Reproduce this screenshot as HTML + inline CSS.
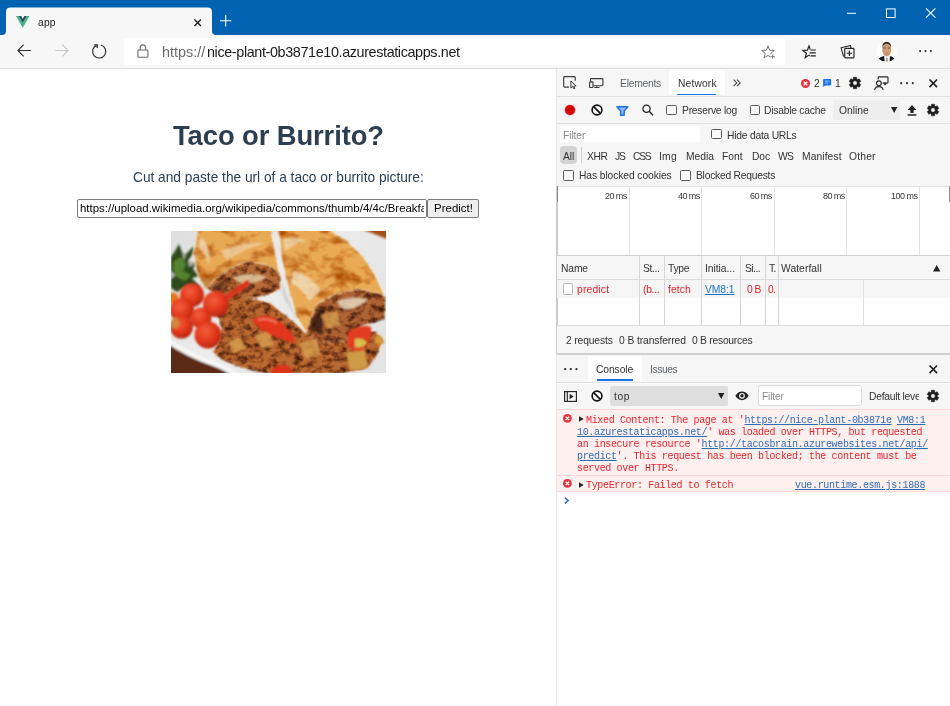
<!DOCTYPE html>
<html><head><meta charset="utf-8"><title>app</title>
<style>
*{box-sizing:border-box;margin:0;padding:0}
html,body{width:950px;height:706px;overflow:hidden;background:#fff}
body{position:relative;font-family:"Liberation Sans",sans-serif;font-size:10.3px;color:#333}
.a{position:absolute}
.t{position:absolute;white-space:pre;line-height:1;will-change:transform}
svg{position:absolute;overflow:visible}
.cb{position:absolute;width:10.5px;height:10.3px;border:1.1px solid #5a5a5a;background:#f9f9f9;border-radius:1.6px}
.hl{position:absolute;height:1px;background:#cdcdcd}
.vl{position:absolute;width:1px;background:#d6d6d6}
.m{will-change:transform;position:absolute;white-space:pre;font-family:"Liberation Mono",monospace;font-size:10px;letter-spacing:-0.343px;line-height:12px;color:#e8252b}
.m a{color:#2e6db4;text-decoration:underline}
</style></head><body>

<!-- browser chrome -->
<div class="a" style="left:0;top:0;width:950px;height:35px;background:#0063b1"></div>
<svg style="left:0;top:0" width="230" height="36" viewBox="0 0 230 36"><path d="M2 35 Q6 35 6 31 L6 12 Q6 7.6 10.5 7.6 L207.5 7.6 Q212 7.6 212 12 L212 31 Q212 35 216 35 L216 36 L2 36 Z" fill="#f7f7f7"/></svg>
<div class="a" style="left:0;top:35px;width:950px;height:33px;background:#f7f7f7"></div>
<div class="a" style="left:0;top:68px;width:950px;height:1px;background:#dcdcdc"></div>
<div class="a" style="left:124px;top:38px;width:661px;height:27px;background:#fff;border-radius:3px"></div>
<!-- vue logo -->
<svg style="left:15.5px;top:15.5px" width="13.5" height="11.7" viewBox="0 0 196 170"><path d="M0 0 L98 170 L196 0 L157 0 L98 102 L39 0 Z" fill="#41b883"/><path d="M39 0 L98 102 L157 0 L121 0 L98 40 L75 0 Z" fill="#35495e"/></svg>
<!-- tab close -->
<svg style="left:194.3px;top:18.5px" width="7.4" height="7.4" viewBox="0 0 8 8"><path d="M0.5 0.5 L7.5 7.5 M7.5 0.5 L0.5 7.5" stroke="#1a1a1a" stroke-width="1.5" fill="none"/></svg>
<!-- new tab plus -->
<svg style="left:219.8px;top:15.1px" width="11.4" height="11.4" viewBox="0 0 12 12"><path d="M6 0 V12 M0 6 H12" stroke="#fff" stroke-width="1.15" fill="none"/></svg>
<!-- window controls -->
<svg style="left:846.8px;top:8px" width="90" height="10" viewBox="0 0 90 10"><path d="M0 5.3 H9" stroke="#fff" stroke-width="1" fill="none"/><rect x="39.5" y="0.9" width="8.6" height="8.6" stroke="#fff" stroke-width="1" fill="none"/><path d="M79 0.4 L88.4 9.6 M88.4 0.4 L79 9.6" stroke="#fff" stroke-width="1.05" fill="none"/></svg>
<!-- back -->
<svg style="left:17.3px;top:44.4px" width="14" height="13" viewBox="0 0 14 13"><path d="M13.8 6.5 H1 M6.6 0.7 L0.9 6.5 L6.6 12.3" stroke="#2b2b2b" stroke-width="1.15" fill="none"/></svg>
<!-- forward -->
<svg style="left:55px;top:44.4px" width="14" height="13" viewBox="0 0 14 13"><path d="M0.2 6.5 H13 M7.4 0.7 L13.1 6.5 L7.4 12.3" stroke="#c8c8c8" stroke-width="1.15" fill="none"/></svg>
<!-- reload -->
<svg style="left:91.9px;top:44.1px" width="15" height="15" viewBox="0 0 15 15"><path d="M8.86 1.06 A6.6 6.6 0 1 1 4.5 1.4" stroke="#2b2b2b" stroke-width="1.15" fill="none"/><path d="M2.2 0.9 H5.2 V3.9" stroke="#2b2b2b" stroke-width="1.25" fill="none"/></svg>
<!-- lock -->
<svg style="left:137px;top:44.4px" width="12" height="14" viewBox="0 0 12 14"><rect x="0.9" y="6" width="10" height="7.2" rx="0.8" stroke="#6b6b6b" stroke-width="1.1" fill="none"/><path d="M3.2 6 V3.6 A2.7 2.7 0 0 1 8.6 3.6 V6" stroke="#6b6b6b" stroke-width="1.1" fill="none"/></svg>
<!-- add favourite star -->
<svg style="left:760px;top:43.6px" width="16" height="16" viewBox="0 0 16 16"><path d="M8.00 1.80 L9.70 6.15 L14.37 6.43 L10.76 9.40 L11.94 13.92 L8.00 11.40 L4.06 13.92 L5.24 9.40 L1.63 6.43 L6.30 6.15 Z" stroke="#757575" stroke-width="1" fill="none" stroke-linejoin="miter"/><rect x="10.4" y="10.4" width="4.6" height="4.8" fill="#fff"/><path d="M12.7 10.6 V14.8 M10.6 12.7 H14.8" stroke="#757575" stroke-width="1"/></svg>
<!-- favourites -->
<svg style="left:803.1px;top:43.6px" width="15" height="16" viewBox="0 0 15 16"><path d="M6.00 2.00 L7.59 6.22 L12.09 6.42 L8.57 9.23 L9.76 13.58 L6.00 11.10 L2.24 13.58 L3.43 9.23 L-0.09 6.42 L4.41 6.22 Z" stroke="#222" stroke-width="1.2" fill="none"/><path d="M7.6 4.6 H15 V15 H8.2 L6.9 11.4 L6.4 10.2 Z" fill="#f7f7f7"/><path d="M7.6 6.0 H12.8 M6.5 8.9 H12.8 M7.6 11.9 H12.8" stroke="#222" stroke-width="1.15"/></svg>
<!-- collections -->
<svg style="left:840px;top:44px" width="15" height="15" viewBox="0 0 15 15"><path d="M3.6 12.6 L1.1 3.8 L10.4 1.5 L11.1 4.2" stroke="#222" stroke-width="1.1" fill="none" stroke-linejoin="round"/><rect x="4.7" y="4.4" width="9.3" height="9.5" rx="0.9" stroke="#222" stroke-width="1.15" fill="#f7f7f7"/><path d="M9.4 6.5 V11.9 M6.7 9.2 H12.1" stroke="#222" stroke-width="1.15"/></svg>
<!-- avatar -->
<svg style="left:875.7px;top:41px" width="21" height="21" viewBox="0 0 40 40"><defs><clipPath id="av"><circle cx="20" cy="20" r="20"/></clipPath><filter id="avb" x="-10%" y="-10%" width="120%" height="120%"><feGaussianBlur stdDeviation="0.7"/></filter></defs><g clip-path="url(#av)"><rect width="40" height="40" fill="#fdfdfd"/><g filter="url(#avb)"><path d="M15 28 L25.5 28 L27.5 39 L15 39 Z" fill="#eef1f8"/><path d="M5 34 Q8 30 15.6 28.6 L16.4 39 L6 39 Z" fill="#15161c"/><path d="M35.6 34 Q33 30 26.6 28.6 L26 39 L35 39 Z" fill="#15161c"/><path d="M19.4 32 L22 32 L22.8 39 L18.8 39 Z" fill="#b39a6e"/><ellipse cx="20.4" cy="16.6" rx="8.6" ry="12.6" fill="#cf9c72"/><path d="M12 13.6 Q11 1.6 20.4 1.4 Q29.8 1.6 28.8 13.6 Q27.6 5.4 20.4 5 Q13.2 5.4 12 13.6 Z" fill="#3a2a20"/><path d="M14 13.4 H18.6 M22.2 13.4 H26.8" stroke="#4a2e20" stroke-width="2" opacity="0.7"/><ellipse cx="20.4" cy="24" rx="2.6" ry="1.5" fill="#d9707a"/></g></g></svg>
<!-- menu dots -->
<svg style="left:919.4px;top:50.2px" width="13" height="2.2" viewBox="0 0 13 2.2"><circle cx="1.1" cy="1.1" r="1.05" fill="#2b2b2b"/><circle cx="6.5" cy="1.1" r="1.05" fill="#2b2b2b"/><circle cx="11.9" cy="1.1" r="1.05" fill="#2b2b2b"/></svg>

<!-- page content -->
<div class="a" style="left:76.5px;top:199px;width:350.5px;height:18.6px;border:1px solid #7a7a7a;border-radius:2px;background:#fff;overflow:hidden"><div class="t" style="left:2.3px;top:3px;font-size:11.45px;color:#000">https://upload.wikimedia.org/wikipedia/commons/thumb/4/4c/Breakfast_burrito.jpg</div><div class="a" style="left:346.3px;top:0;width:4px;height:18px;background:#fff"><!--clipstrip--></div></div>
<div class="a" style="left:427.2px;top:199px;width:52px;height:18.6px;border:1px solid #7a7a7a;border-radius:2px;background:#efefef"></div>
<svg style="left:171px;top:231px" width="215" height="142" viewBox="0 0 215 142">
<defs>
<clipPath id="ic"><rect width="215" height="142"/></clipPath>
<filter id="b1" x="-10%" y="-10%" width="120%" height="120%"><feGaussianBlur stdDeviation="0.9"/></filter>
<filter id="b3" x="-20%" y="-20%" width="140%" height="140%"><feGaussianBlur stdDeviation="3"/></filter>
<filter id="mot" x="0" y="0" width="100%" height="100%" color-interpolation-filters="sRGB"><feTurbulence type="fractalNoise" baseFrequency="0.13 0.16" numOctaves="3" seed="7" result="n"/><feColorMatrix in="n" type="matrix" values="1.5 0 0 0 0.12  1.7 0 0 0 -0.04  1.7 0 0 0 -0.1  0 0 0 0 1" result="g"/><feBlend mode="multiply" in="SourceGraphic" in2="g" result="m"/><feComposite operator="in" in="m" in2="SourceGraphic"/></filter>
<filter id="mot2" x="0" y="0" width="100%" height="100%" color-interpolation-filters="sRGB"><feTurbulence type="fractalNoise" baseFrequency="0.05 0.075" numOctaves="3" seed="21" result="n"/><feColorMatrix in="n" type="matrix" values="0 0.7 0 0 0.62  0 1.5 0 0 0.18  0 2.6 0 0 -0.42  0 0 0 0 1" result="g"/><feBlend mode="multiply" in="SourceGraphic" in2="g" result="m"/><feComposite operator="in" in="m" in2="SourceGraphic"/></filter>
<linearGradient id="pl" x1="0" y1="0" x2="1" y2="0.6"><stop offset="0" stop-color="#dedede"/><stop offset="0.5" stop-color="#ececec"/><stop offset="1" stop-color="#e4e4e4"/></linearGradient>
<radialGradient id="tm" cx="0.4" cy="0.36" r="0.68"><stop offset="0" stop-color="#f4603c"/><stop offset="0.55" stop-color="#e2391c"/><stop offset="1" stop-color="#b3240e"/></radialGradient>
</defs>
<g clip-path="url(#ic)">
<rect width="215" height="142" fill="url(#pl)"/>
<g filter="url(#b1)">
<!-- wood + plate rim -->
<path d="M-3 112 Q18 127 42 135 Q56 140 66 146 L-3 146 Z" fill="#5a2c12"/>
<path d="M-3 107 Q20 122 46 131 Q62 137 74 146 L62 146 Q54 139 40 134 Q16 126 -3 113 Z" fill="#f6f6f6"/>
<path d="M190 -2 L218 -2 L218 9 Q204 3 190 -2 Z" fill="#a3501e"/>
<path d="M108 42 Q116 66 128 92 L134 100 L124 86 L112 66 Z" fill="#d2d2d2"/>
<!-- parsley -->
<path d="M0 26 L4 20 L8 13 L11 21 L15 23 L23 15 L21 24 L17 30 L25 32 L22 38 L28 45 L21 47 L29 56 L23 61 L14 56 L6 61 L0 57 Z" fill="#2f4a1b"/>
<path d="M11 21 L15 23 L13 30 Z M17 30 L25 32 L18 36 Z M0 40 L5 44 L0 48 Z" fill="#dcdcdc" opacity="0.7"/>
<path d="M3 30 L10 26 L15 33 L12 40 L20 44 L14 50 L6 46 L2 38 Z" fill="#55832e"/>
</g>
<g filter="url(#mot2)"><g filter="url(#b1)">
<!-- left tortilla -->
<path d="M27 -2 L100 -2 L104 20 L109 44 L109 56 L96 62 L60 64 L45 60 L35 58 L27 45 L22 22 Z" fill="#e8a955"/>
<!-- right tortilla -->
<path d="M107 -2 L158 -2 L176 10 L192 25 L204 43 L214 65 L213 84 L190 90 L150 100 L135 102 L125 85 L118 60 L112 35 Z" fill="#e9aa55"/>
</g></g>
<g filter="url(#b1)">
<path d="M30 6 Q40 14 38 34 Q34 22 27 16 Z" fill="#f0dcb4" opacity="0.8"/>
<path d="M50 20 Q70 10 96 12 Q70 18 56 30 Z" fill="#f2e0bc" opacity="0.6"/>
<path d="M122 40 Q140 44 150 60 L138 70 Q130 56 120 52 Z" fill="#f1e2c2" opacity="0.75"/>
<path d="M112 8 Q124 4 136 10 Q124 12 114 20 Z" fill="#f1dfba" opacity="0.7"/>
<path d="M27 44 L35 58 L45 47 Q36 50 27 44 Z" fill="#b97a36" opacity="0.7"/>
</g>
<g filter="url(#mot)"><g filter="url(#b1)">
<!-- left filling -->
<path d="M35 58 L45 47 L60 37 L75 30 L98 34 L109 44 L110 58 L98 64 L85 67 L60 68 L45 63 Z" fill="#b56a38"/>
<!-- right filling -->
<path d="M146 73 L165 63 L186 58 L208 62 L215 66 L214 88 L200 93 L190 95 L175 110 L150 112 L135 102 L140 88 Z" fill="#ad6434"/>
<!-- hash -->
<path d="M60 66 L85 68 L100 72 L112 82 L125 92 L135 102 L150 112 L175 110 L190 100 L205 100 L212 110 L206 125 L196 138 L170 143 L95 143 L70 137 L50 129 L41 121 L48 110 L50 96 L45 82 L52 72 Z" fill="#b96a32"/>
</g></g>
<g filter="url(#b1)">
<path d="M139 92 Q144 80 156 76 Q150 90 152 104 Q144 104 139 92 Z" fill="#2a160a" opacity="0.75"/>
<path d="M40 58 Q48 50 58 46 Q52 56 50 63 Z" fill="#3a1e0e" opacity="0.6"/>
<!-- cream / potato patches -->
<path d="M62 46 Q78 40 96 46 Q88 52 74 53 Q66 52 62 46 Z" fill="#e2c9a0" opacity="0.85"/>
<path d="M166 70 Q180 64 198 68 Q190 76 176 79 Q168 78 166 70 Z" fill="#e6d6bc" opacity="0.85"/>
<path d="M175 122 L194 118 L197 137 L179 140 Z" fill="#cf9a44"/>
<path d="M84 104 L98 100 L103 114 L90 118 Z M128 112 L146 108 L150 124 L134 128 Z M58 110 L70 106 L75 118 L62 122 Z M150 84 L166 80 L170 94 L156 98 Z" fill="#d9a050" opacity="0.8"/>
<path d="M205 104 Q212 104 213 112 Q208 116 203 111 Z" fill="#d8973c"/>
<!-- peppers -->
<path d="M57 66 L76 52" stroke="#dc341c" stroke-width="5.5" stroke-linecap="round"/>
<path d="M81 89 Q90 83 100 85 Q112 91 122 104 L125 112 Q114 110 100 104 Q88 99 81 89 Z" fill="#e2341c"/>
<path d="M87 89 Q96 86 106 92" stroke="#f47a5c" stroke-width="2.2" fill="none"/>
<path d="M177 101 Q190 92 200 96 Q202 110 190 120 Q180 122 176 112 Z" fill="#e23c20"/>
<path d="M184 108 Q192 106 196 112 Q190 118 184 116 Z" fill="#d8c050"/>
<path d="M101 138 Q110 130 120 137 L122 144 L100 144 Z" fill="#dc341c"/>
<!-- cherry tomatoes -->
<circle cx="2" cy="67" r="5.5" fill="#e8741c"/>
<circle cx="21" cy="64" r="12" fill="url(#tm)"/>
<circle cx="45" cy="73" r="13" fill="url(#tm)"/>
<circle cx="11" cy="79" r="12" fill="url(#tm)"/>
<circle cx="30" cy="87" r="10.5" fill="url(#tm)"/>
<circle cx="10.5" cy="96" r="11.5" fill="url(#tm)"/>
<ellipse cx="4" cy="92" rx="4" ry="6" fill="#c8a040" opacity="0.7"/>
<circle cx="37" cy="104" r="13.5" fill="url(#tm)"/>
</g>
</g>
</svg>

<!-- devtools frame -->
<div class="a" style="left:556px;top:69px;width:394px;height:637px;background:#fff"></div>
<div class="a" style="left:556px;top:69px;width:1px;height:637px;background:#e6e6e6"></div>
<div class="a" style="left:556.2px;top:186px;width:1.4px;height:168px;background:#cbcbcb"></div>
<!-- main tab bar -->
<div class="a" style="left:557px;top:69px;width:393px;height:27px;background:#f6f6f6"></div>
<div class="a" style="left:669px;top:70px;width:56px;height:25px;background:#fff;border-radius:3px 3px 0 0"></div>
<div class="a" style="left:677px;top:93.5px;width:38.5px;height:1.6px;background:#1a73e8"></div>
<div class="hl" style="left:557px;top:95.6px;width:393px;background:#dfdfdf"></div>
<!-- network toolbar -->
<div class="a" style="left:557px;top:96.6px;width:393px;height:27px;background:#f6f6f6"></div>
<div class="hl" style="left:557px;top:123.2px;width:393px;background:#dfdfdf"></div>
<!-- filter section -->
<div class="a" style="left:557px;top:124px;width:393px;height:62px;background:#f6f6f6"></div>
<div class="a" style="left:560px;top:126.3px;width:140px;height:15.6px;background:#fff"></div>
<div class="a" style="left:560px;top:146.4px;width:17.2px;height:17.8px;background:#d4d4d4;border-radius:4px"></div>
<div class="vl" style="left:581px;top:147px;height:16px;background:#cfcfcf"></div>
<div class="hl" style="left:557px;top:185.6px;width:393px;background:#e2e2e2"></div>
<!-- timeline -->
<div class="vl" style="left:629px;top:186.5px;height:69px;background:#e3e3e3"></div>
<div class="vl" style="left:701.3px;top:186.5px;height:69px;background:#e3e3e3"></div>
<div class="vl" style="left:774px;top:186.5px;height:69px;background:#e3e3e3"></div>
<div class="vl" style="left:846.2px;top:186.5px;height:69px;background:#e3e3e3"></div>
<div class="vl" style="left:919.2px;top:186.5px;height:69px;background:#e3e3e3"></div>
<div class="a" style="left:557px;top:186px;width:1.3px;height:15.5px;background:#8c8c8c"></div>
<div class="a" style="left:948.6px;top:186px;width:1.4px;height:15.5px;background:#8c8c8c"></div>
<div class="a" style="left:557px;top:254.6px;width:393px;height:1.8px;background:#cfcfcf"></div>
<!-- table -->
<div class="a" style="left:557px;top:256.4px;width:393px;height:23px;background:#f6f6f6"></div>
<div class="hl" style="left:557px;top:278.8px;width:393px;background:#dadada"></div>
<div class="a" style="left:557px;top:280px;width:393px;height:18.4px;background:#f5f5f5"></div>
<div class="vl" style="left:639.3px;top:256.4px;height:68.6px"></div>
<div class="vl" style="left:664.1px;top:256.4px;height:68.6px"></div>
<div class="vl" style="left:701.1px;top:256.4px;height:68.6px"></div>
<div class="vl" style="left:740.3px;top:256.4px;height:68.6px"></div>
<div class="vl" style="left:764.6px;top:256.4px;height:68.6px"></div>
<div class="vl" style="left:777.6px;top:256.4px;height:68.6px"></div>
<div class="vl" style="left:863.2px;top:280px;height:45px;background:#e2e2e2"></div>
<div class="a" style="left:562.5px;top:283.2px;width:10.3px;height:11.6px;background:#fff;border:1px solid #b4b4b4;border-radius:1.5px"></div>
<div class="hl" style="left:557px;top:324.8px;width:393px;background:#dcdcdc"></div>
<!-- status bar -->
<div class="a" style="left:557px;top:325.8px;width:393px;height:27.4px;background:#f6f6f6"></div>
<div class="a" style="left:557px;top:353px;width:393px;height:1.8px;background:#cfcfcf"></div>
<!-- drawer tabs -->
<div class="a" style="left:557px;top:354.8px;width:393px;height:28px;background:#f6f6f6"></div>
<div class="a" style="left:588.3px;top:356.3px;width:53.4px;height:24.6px;background:#fff;border-radius:3px 3px 0 0"></div>
<div class="a" style="left:596.5px;top:379.4px;width:36px;height:1.6px;background:#1a73e8"></div>
<div class="hl" style="left:557px;top:382.4px;width:393px;background:#dfdfdf"></div>
<!-- console toolbar -->
<div class="a" style="left:557px;top:383.6px;width:393px;height:25.6px;background:#f6f6f6"></div>
<div class="a" style="left:610px;top:385.8px;width:118px;height:20px;background:#dedede;border-radius:2px"></div>
<div class="a" style="left:758px;top:385.4px;width:103.6px;height:21px;background:#fff;border:1px solid #dcdcdc;border-radius:2.5px"></div>
<div class="a" style="left:833px;top:99.6px;width:66.5px;height:20.4px;background:#eeeeee;border-radius:2px"></div>
<div class="hl" style="left:557px;top:409.2px;width:393px;background:#e2e2e2"></div>
<div class="a" style="left:868px;top:388px;width:51.4px;height:16px;overflow:hidden"><div class="t" style="left:0.7px;top:4.2px;font-size:10.3px;color:#333;letter-spacing:-0.24px">Default levels</div></div>

<!-- checkboxes -->
<div class="cb" style="left:666.4px;top:105px"></div>
<div class="cb" style="left:749.8px;top:105px"></div>
<div class="cb" style="left:711px;top:128.8px"></div>
<div class="cb" style="left:563.2px;top:170.3px"></div>
<div class="cb" style="left:680px;top:170.3px"></div>

<!-- icons: inspect -->
<svg style="left:563.3px;top:76.4px" width="14" height="13" viewBox="0 0 14 13"><path d="M5.9 11.1 H1.6 Q0.7 11.1 0.7 10.2 V1.5 Q0.7 0.6 1.6 0.6 H11.3 Q12.2 0.6 12.2 1.5 V4.8" stroke="#3a3a3a" stroke-width="1.15" fill="none"/><path d="M7.9 4.9 L7.9 12.1 L9.7 10.5 L10.9 12.9 L11.9 12.4 L10.8 10.1 L13.1 9.9 Z" fill="#e9e9e9" stroke="#3a3a3a" stroke-width="0.95" stroke-linejoin="round"/></svg>
<!-- device -->
<svg style="left:589px;top:78.4px" width="15" height="11" viewBox="0 0 15 11"><path d="M4.2 7.7 H13 Q13.9 7.7 13.9 6.8 V1.5 Q13.9 0.6 13 0.6 H2.4 Q1.5 0.6 1.5 1.5 V3.6" stroke="#3a3a3a" stroke-width="1.15" fill="none"/><rect x="0.6" y="3.9" width="3.4" height="5.6" rx="0.7" stroke="#3a3a3a" stroke-width="1.1" fill="#f6f6f6"/><path d="M5.4 9.5 H10.4" stroke="#3a3a3a" stroke-width="1"/><path d="M6.9 9.4 L7.8 7.8 L8.7 9.4 Z" fill="#3a3a3a"/></svg>
<!-- chevrons -->
<svg style="left:732.6px;top:79px" width="8" height="8" viewBox="0 0 8 8"><path d="M0.6 0.6 L3.8 3.9 L0.6 7.2 M4 0.6 L7.2 3.9 L4 7.2" stroke="#444" stroke-width="1.05" fill="none"/></svg>
<!-- error badge -->
<svg style="left:801.3px;top:78.9px" width="9" height="9" viewBox="0 0 10 10"><circle cx="5" cy="5" r="5" fill="#e8303c"/><path d="M3 3 L7 7 M7 3 L3 7" stroke="#fff" stroke-width="1.5"/></svg>
<!-- message badge -->
<svg style="left:823px;top:79px" width="8.2" height="8" viewBox="0 0 10 10"><path d="M1 0 H9 Q10 0 10 1 V7 Q10 8 9 8 H3 L0 10 V1 Q0 0 1 0 Z" fill="#1a73e8"/><path d="M2.2 2.6 H7.8 M2.2 5 H6.4" stroke="#cfe0fb" stroke-width="0.9"/></svg>
<!-- gears -->
<svg style="left:849.3px;top:77.4px" width="12" height="12" viewBox="-6 -6 12 12"><path id="gear" d="M-1.75 -3.93 L-1.61 -5.78 L1.61 -5.78 L1.75 -3.93 L2.53 -3.48 L4.20 -4.29 L5.81 -1.49 L4.28 -0.45 L4.28 0.45 L5.81 1.49 L4.20 4.29 L2.53 3.48 L1.75 3.93 L1.61 5.78 L-1.61 5.78 L-1.75 3.93 L-2.53 3.48 L-4.20 4.29 L-5.81 1.49 L-4.28 0.45 L-4.28 -0.45 L-5.81 -1.49 L-4.20 -4.29 L-2.53 -3.48 Z M2.20 0 A2.20 2.20 0 1 0 -2.20 0 A2.20 2.20 0 1 0 2.20 0 Z" fill="#1e1e1e" fill-rule="evenodd" stroke="#1e1e1e" stroke-width="0.5" stroke-linejoin="round"/></svg>
<svg style="left:926.7px;top:104px" width="12" height="12" viewBox="-6 -6 12 12"><use href="#gear"/></svg>
<svg style="left:926.7px;top:389.9px" width="12" height="12" viewBox="-6 -6 12 12"><use href="#gear"/></svg>
<!-- feedback -->
<svg style="left:874px;top:76px" width="15" height="15" viewBox="0 0 15 15"><circle cx="4.9" cy="7.3" r="2.4" stroke="#2a2a2a" stroke-width="1.15" fill="none"/><path d="M0.7 14 Q1 10.6 4.9 10.6 Q8.8 10.6 9.1 14" stroke="#2a2a2a" stroke-width="1.15" fill="none"/><path d="M4.2 3.6 V1.8 Q4.2 0.9 5.1 0.9 H13.1 Q14 0.9 14 1.8 V6.2 Q14 7.1 13.1 7.1 H12.2 L10.9 8.9 V7.1 H8.6" stroke="#2a2a2a" stroke-width="1.15" fill="none" stroke-linejoin="round"/><path d="M9.4 6.6 H12.4 L10.9 8.8 Z" fill="#2a2a2a"/></svg>
<!-- more dots -->
<svg style="left:900px;top:82.3px" width="14" height="2.4" viewBox="0 0 14 2.4"><circle cx="1.2" cy="1.2" r="1.1" fill="#333"/><circle cx="7" cy="1.2" r="1.1" fill="#333"/><circle cx="12.8" cy="1.2" r="1.1" fill="#333"/></svg>
<svg style="left:563.6px;top:368.3px" width="13.6" height="2.2" viewBox="0 0 13.6 2.2"><circle cx="1.1" cy="1.1" r="1.15" fill="#2a2a2a"/><circle cx="6.8" cy="1.1" r="1.15" fill="#2a2a2a"/><circle cx="12.5" cy="1.1" r="1.15" fill="#2a2a2a"/></svg>
<!-- close X -->
<svg style="left:928.6px;top:79.2px" width="8.6" height="8.6" viewBox="0 0 8 8"><path d="M0.5 0.5 L7.5 7.5 M7.5 0.5 L0.5 7.5" stroke="#1e1e1e" stroke-width="1.5" fill="none"/></svg>
<svg style="left:928.6px;top:364.9px" width="8.6" height="8.6" viewBox="0 0 8 8"><path d="M0.5 0.5 L7.5 7.5 M7.5 0.5 L0.5 7.5" stroke="#1e1e1e" stroke-width="1.5" fill="none"/></svg>
<!-- record -->
<svg style="left:564.4px;top:104px" width="12" height="12" viewBox="0 0 12 12"><circle cx="6" cy="6" r="5.8" fill="#f2b8b8"/><circle cx="6" cy="6" r="5" fill="#d60000"/></svg>
<!-- clear (network) -->
<svg style="left:590.7px;top:104.1px" width="12" height="12" viewBox="0 0 12 12"><circle cx="6" cy="6" r="4.9" stroke="#111" stroke-width="1.6" fill="none"/><path d="M2.6 2.6 L9.4 9.4" stroke="#111" stroke-width="1.6"/></svg>
<!-- clear (console) -->
<svg style="left:590.7px;top:389.9px" width="12" height="12" viewBox="0 0 12 12"><circle cx="6" cy="6" r="4.9" stroke="#111" stroke-width="1.6" fill="none"/><path d="M2.6 2.6 L9.4 9.4" stroke="#111" stroke-width="1.6"/></svg>
<!-- filter funnel -->
<svg style="left:615.8px;top:105.6px" width="12.6" height="10.6" viewBox="0 0 12.6 10.6"><path d="M0.9 0.8 H11.9 L8.2 5 V9.3 H4.6 V5 Z" stroke="#1a73e8" stroke-width="1.4" fill="#8cb9f2" stroke-linejoin="round"/></svg>
<!-- search -->
<svg style="left:641.5px;top:104.4px" width="12" height="12" viewBox="0 0 12 12"><circle cx="4.5" cy="4.7" r="3.6" stroke="#222" stroke-width="1.3" fill="none"/><path d="M7.1 7.3 L11 11.2" stroke="#222" stroke-width="1.5"/></svg>
<!-- select arrows -->
<svg style="left:890.6px;top:106.6px" width="6.4" height="6" viewBox="0 0 6.4 6"><path d="M0 0 H6.4 L3.2 6 Z" fill="#222"/></svg>
<svg style="left:718px;top:393.2px" width="6.4" height="6" viewBox="0 0 6.4 6"><path d="M0 0 H6.4 L3.2 6 Z" fill="#222"/></svg>
<!-- upload -->
<svg style="left:907.2px;top:104.6px" width="10" height="11" viewBox="0 0 10 11"><path d="M5 0 L9.4 5 H6.6 V8 H3.4 V5 H0.6 Z" fill="#222"/><rect x="0.6" y="9.2" width="8.8" height="1.5" fill="#222"/></svg>
<!-- sort arrow -->
<svg style="left:933.4px;top:264.6px" width="7.4" height="6.6" viewBox="0 0 7.4 6.6"><path d="M3.7 0 L7.4 6.6 H0 Z" fill="#222"/></svg>
<!-- console sidebar toggle -->
<svg style="left:563.6px;top:390.8px" width="13" height="11" viewBox="0 0 13 11"><rect x="0.6" y="0.6" width="11.8" height="9.8" stroke="#222" stroke-width="1.15" fill="none"/><path d="M3.3 0.6 V10.4" stroke="#222" stroke-width="1.1"/><path d="M5.6 2.8 L9.6 5.5 L5.6 8.2 Z" fill="#222"/></svg>
<!-- eye -->
<svg style="left:735px;top:391.2px" width="14" height="9.6" viewBox="0 0 14 9.6"><path d="M0.3 4.8 Q3 0.4 7 0.4 Q11 0.4 13.7 4.8 Q11 9.2 7 9.2 Q3 9.2 0.3 4.8 Z" fill="#222"/><circle cx="7" cy="4.8" r="2.9" fill="#f6f6f6"/><circle cx="7" cy="4.8" r="1.7" fill="#222"/></svg>

<!-- text labels -->
<div class="t" style="left:37.6px;top:17.6px;font-size:10.3px;letter-spacing:0.171px;color:#1b1b1b;">app</div>
<div class="t" style="left:161.5px;top:45.4px;font-size:14.4px;letter-spacing:0.025px;color:#6a6a6a;">https://</div>
<div class="t" style="left:206.6px;top:45.4px;font-size:14.4px;letter-spacing:-0.385px;color:#1b1b1b;">nice-plant-0b3871e10.azurestaticapps.net</div>
<div class="t" style="left:172.9px;top:121.7px;font-size:27.4px;letter-spacing:-0.096px;color:#2c3e50;font-weight:bold;">Taco or Burrito?</div>
<div class="t" style="left:132.5px;top:171.4px;font-size:13.73px;letter-spacing:-0.010px;color:#2c3e50;">Cut and paste the url of a taco or burrito picture:</div>
<div class="t" style="left:433.8px;top:202.9px;font-size:11.45px;letter-spacing:0.027px;color:#000;">Predict!</div>
<div class="t" style="left:619.8px;top:79.3px;font-size:10.3px;letter-spacing:-0.242px;color:#5f6368;">Elements</div>
<div class="t" style="left:677.5px;top:79.3px;font-size:10.3px;letter-spacing:0.133px;color:#333;">Network</div>
<div class="t" style="left:813.5px;top:79.3px;font-size:10.3px;letter-spacing:-0.334px;color:#333;">2</div>
<div class="t" style="left:835.0px;top:79.3px;font-size:10.3px;letter-spacing:-1.434px;color:#333;">1</div>
<div class="t" style="left:682.3px;top:106.2px;font-size:10.3px;letter-spacing:-0.234px;color:#333;">Preserve log</div>
<div class="t" style="left:764.4px;top:106.2px;font-size:10.3px;letter-spacing:-0.230px;color:#333;">Disable cache</div>
<div class="t" style="left:838.5px;top:106.2px;font-size:10.3px;letter-spacing:0.006px;color:#333;">Online</div>
<div class="t" style="left:562.7px;top:130.8px;font-size:10.3px;letter-spacing:-0.098px;color:#8a8a8a;">Filter</div>
<div class="t" style="left:726.5px;top:130.5px;font-size:10.3px;letter-spacing:-0.228px;color:#333;">Hide data URLs</div>
<div class="t" style="left:562.7px;top:152.3px;font-size:10.3px;letter-spacing:-0.018px;color:#333;">All</div>
<div class="t" style="left:586.5px;top:152.3px;font-size:10.3px;letter-spacing:-0.383px;color:#333;">XHR</div>
<div class="t" style="left:614.5px;top:152.3px;font-size:10.3px;letter-spacing:-1.116px;color:#333;">JS</div>
<div class="t" style="left:632.9px;top:152.3px;font-size:10.3px;letter-spacing:-1.263px;color:#333;">CSS</div>
<div class="t" style="left:658.7px;top:152.3px;font-size:10.3px;letter-spacing:0.243px;color:#333;">Img</div>
<div class="t" style="left:685.5px;top:152.3px;font-size:10.3px;letter-spacing:-0.009px;color:#333;">Media</div>
<div class="t" style="left:722.3px;top:152.3px;font-size:10.3px;letter-spacing:-0.002px;color:#333;">Font</div>
<div class="t" style="left:751.7px;top:152.3px;font-size:10.3px;letter-spacing:-0.104px;color:#333;">Doc</div>
<div class="t" style="left:778.1px;top:152.3px;font-size:10.3px;letter-spacing:-0.597px;color:#333;">WS</div>
<div class="t" style="left:801.7px;top:152.3px;font-size:10.3px;letter-spacing:0.085px;color:#333;">Manifest</div>
<div class="t" style="left:849.3px;top:152.3px;font-size:10.3px;letter-spacing:0.187px;color:#333;">Other</div>
<div class="t" style="left:579.2px;top:171.3px;font-size:10.3px;letter-spacing:-0.097px;color:#333;">Has blocked cookies</div>
<div class="t" style="left:696.0px;top:171.3px;font-size:10.3px;letter-spacing:-0.244px;color:#333;">Blocked Requests</div>
<div class="t" style="left:605.4px;top:192.0px;font-size:9.0px;letter-spacing:-0.583px;color:#333;">20 ms</div>
<div class="t" style="left:677.6px;top:192.0px;font-size:9.0px;letter-spacing:-0.583px;color:#333;">40 ms</div>
<div class="t" style="left:750.3px;top:192.0px;font-size:9.0px;letter-spacing:-0.583px;color:#333;">60 ms</div>
<div class="t" style="left:822.6px;top:192.0px;font-size:9.0px;letter-spacing:-0.583px;color:#333;">80 ms</div>
<div class="t" style="left:890.8px;top:192.0px;font-size:9.0px;letter-spacing:-0.519px;color:#333;">100 ms</div>
<div class="t" style="left:561.3px;top:264.4px;font-size:10.3px;letter-spacing:-0.142px;color:#333;">Name</div>
<div class="t" style="left:643.4px;top:264.4px;font-size:10.3px;letter-spacing:-0.383px;color:#333;">St...</div>
<div class="t" style="left:668.2px;top:264.4px;font-size:10.3px;letter-spacing:-0.307px;color:#333;">Type</div>
<div class="t" style="left:705.1px;top:264.4px;font-size:10.3px;letter-spacing:-0.038px;color:#333;">Initia...</div>
<div class="t" style="left:745.2px;top:264.4px;font-size:10.3px;letter-spacing:-0.530px;color:#333;">Si...</div>
<div class="t" style="left:769.0px;top:264.4px;font-size:10.3px;letter-spacing:-0.608px;color:#333;">T.</div>
<div class="t" style="left:781.4px;top:264.4px;font-size:10.3px;letter-spacing:0.061px;color:#333;">Waterfall</div>
<div class="t" style="left:577.1px;top:284.7px;font-size:10.3px;letter-spacing:0.185px;color:#e52329;">predict</div>
<div class="t" style="left:643.4px;top:284.7px;font-size:10.3px;letter-spacing:-0.270px;color:#e52329;">(b...</div>
<div class="t" style="left:668.2px;top:284.7px;font-size:10.3px;letter-spacing:0.074px;color:#e52329;">fetch</div>
<div class="t" style="left:705.1px;top:284.7px;font-size:10.3px;letter-spacing:-0.073px;color:#1a6fc4;text-decoration:underline">VM8:1</div>
<div class="t" style="left:747.3px;top:284.7px;font-size:10.3px;letter-spacing:-0.590px;color:#e52329;">0 B</div>
<div class="t" style="left:768.3px;top:284.7px;font-size:10.3px;letter-spacing:-0.797px;color:#e52329;">0.</div>
<div class="t" style="left:566.1px;top:335.6px;font-size:10.3px;letter-spacing:-0.139px;color:#333;">2 requests</div>
<div class="t" style="left:618.7px;top:335.6px;font-size:10.3px;letter-spacing:-0.087px;color:#333;">0 B transferred</div>
<div class="t" style="left:691.8px;top:335.6px;font-size:10.3px;letter-spacing:-0.249px;color:#333;">0 B resources</div>
<div class="t" style="left:596.4px;top:365.0px;font-size:10.3px;letter-spacing:-0.097px;color:#333;">Console</div>
<div class="t" style="left:649.7px;top:365.0px;font-size:10.3px;letter-spacing:-0.411px;color:#5f6368;">Issues</div>
<div class="t" style="left:613.9px;top:392.2px;font-size:10.3px;letter-spacing:0.557px;color:#333;">top</div>
<div class="t" style="left:762.3px;top:392.2px;font-size:10.3px;letter-spacing:-0.198px;color:#8a8a8a;">Filter</div>
<!-- console messages -->
<div class="a" style="left:557px;top:410px;width:393px;height:65px;background:#fff0f0"></div>
<div class="hl" style="left:557px;top:409.4px;width:393px;background:#ffd6d6"></div>
<div class="hl" style="left:557px;top:475px;width:393px;background:#ffd6d6"></div>
<div class="a" style="left:557px;top:475.8px;width:393px;height:15.4px;background:#fff0f0"></div>
<div class="hl" style="left:557px;top:491.2px;width:393px;background:#ffd6d6"></div>
<svg style="left:562.5px;top:414.1px" width="8.8" height="8.8" viewBox="0 0 10 10"><circle cx="5" cy="5" r="5" fill="#e8303c"/><path d="M3 3 L7 7 M7 3 L3 7" stroke="#fff" stroke-width="1.5"/></svg>
<svg style="left:562.5px;top:479.2px" width="8.8" height="8.8" viewBox="0 0 10 10"><circle cx="5" cy="5" r="5" fill="#e8303c"/><path d="M3 3 L7 7 M7 3 L3 7" stroke="#fff" stroke-width="1.5"/></svg>
<svg style="left:578.8px;top:416.3px" width="4.7" height="6" viewBox="0 0 4.6 5.6"><path d="M0 0 L4.6 2.8 L0 5.6 Z" fill="#222"/></svg>
<svg style="left:578.8px;top:481.8px" width="4.7" height="6" viewBox="0 0 4.6 5.6"><path d="M0 0 L4.6 2.8 L0 5.6 Z" fill="#222"/></svg>
<div class="m" style="left:585.6px;top:414.8px">Mixed Content: The page at '<a>https://nice-plant-0b3871e</a></div>
<div class="m" style="left:897.2px;top:414.8px"><a>VM8:1</a></div>
<div class="m" style="left:577.2px;top:426.7px"><a>10.azurestaticapps.net/</a>' was loaded over HTTPS, but requested
an insecure resource '<a>http://tacosbrain.azurewebsites.net/api/</a>
<a>predict</a>'. This request has been blocked; the content must be
served over HTTPS.</div>
<div class="m" style="left:585.6px;top:479.7px">TypeError: Failed to fetch</div>
<div class="m" style="left:795.2px;top:479.7px"><a>vue.runtime.esm.js:1888</a></div>
<svg style="left:564.2px;top:497.4px" width="5.2" height="7" viewBox="0 0 5.2 7"><path d="M0.8 0.6 L4.2 3.5 L0.8 6.4" stroke="#2a6ae0" stroke-width="1.4" fill="none"/></svg>


</body></html>
